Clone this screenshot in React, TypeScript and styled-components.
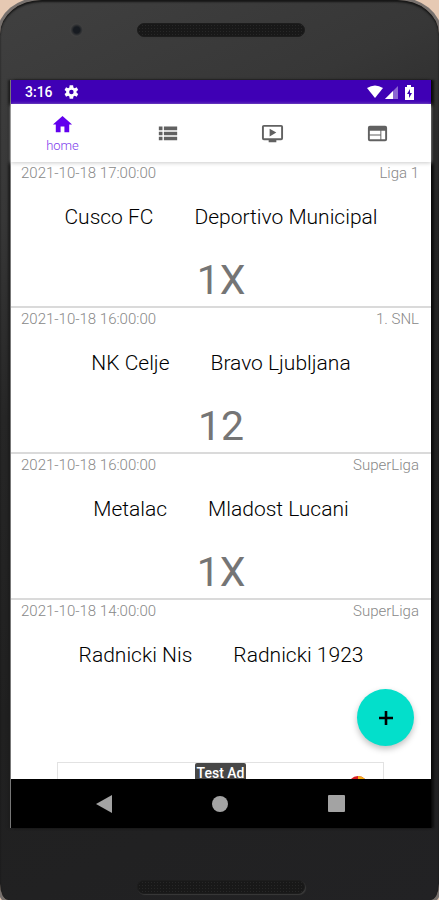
import React from 'react';
import styled, { createGlobalStyle } from 'styled-components';

const GlobalStyle = createGlobalStyle`
  * { box-sizing: border-box; }
  body { margin: 0; background: #e6c9b3; font-family: Roboto, "Liberation Sans", sans-serif; }
  button { border: 0; padding: 0; background: none; font: inherit; cursor: pointer; }
`;

const Phone = styled.div`
  min-height: 100vh;
  display: flex;
  flex-direction: column;
  padding: 0 8px 0 11px;
  background: linear-gradient(155deg, #404040 0%, #373737 20%, #262626 38%, #202020 65%, #222224 100%);
  border-radius: 42px 42px 8px 8px / 34px 34px 16px 16px;
  box-shadow: inset 0 2px 2px #161616, 0 0 0 3px #77716e;
`;

const Bezel = styled.div<{ $height: number; $top: number }>`
  flex: none;
  display: grid;
  grid-template-columns: 1fr 168px 1fr;
  align-items: start;
  height: ${p => p.$height}px;
  padding-top: ${p => p.$top}px;
`;

const Camera = styled.span`
  width: 14px;
  height: 14px;
  margin-left: 58px;
  border-radius: 50%;
  background: radial-gradient(circle at 55% 50%, #171b21 0 30%, #292b2e 42%, #414141 60%, #363636 100%);
`;

const Speaker = styled.span`
  grid-column: 2;
  height: 14px;
  border-radius: 7px;
  background-color: #181818;
  background-image: radial-gradient(#272727 30%, transparent 45%);
  background-size: 3px 3px;
  border: 1px solid #1d1d1d;
  box-shadow: 1px 1px 1px #3a3a3a;
`;

const Screen = styled.div`
  flex: 1;
  min-height: 0;
  display: flex;
  flex-direction: column;
  background: #fff;
  box-shadow: -1px 0 0 #777, 1px 0 0 #090909, 3px 0 2px #101010, -3px 0 2px #1d1d1d;
`;

const StatusBar = styled.div`
  flex: none;
  display: flex;
  align-items: center;
  height: 24px;
  padding: 0 14px;
  background: #3f00b5;
  color: #fff;
  font-size: 14px;
  font-weight: 500;
`;

const StatusIcons = styled.div`
  display: flex;
  align-items: center;
  gap: 2px;
  margin-left: auto;
`;

const Glyph = styled.svg<{ $size: number; $gap?: number }>`
  display: block;
  width: ${p => p.$size}px;
  height: ${p => p.$size}px;
  margin-left: ${p => p.$gap ?? 0}px;
  fill: currentColor;
`;

const Tabs = styled.nav`
  flex: none;
  display: grid;
  grid-template-columns: repeat(4, 1fr);
  height: 58px;
  background: #fff;
  box-shadow: 0 1px 4px #ccc;
  z-index: 1;
`;

const Tab = styled.button<{ $active?: boolean }>`
  display: flex;
  flex-direction: column;
  align-items: center;
  justify-content: center;
  gap: 3px;
  padding-right: 2px;
  color: ${p => (p.$active ? '#6200ee' : '#616161')};
  font-size: 13px;
  line-height: 14px;
`;

const TabLabel = styled.span`
  color: #7c3aec;
  font-weight: 300;
`;

const Content = styled.main`
  flex: 1;
  min-height: 0;
  position: relative;
  display: flex;
  flex-direction: column;
`;

const Matches = styled.ul`
  flex: 1;
  min-height: 0;
  margin: 0;
  padding: 0;
  list-style: none;
  overflow: hidden;
`;

const Match = styled.li`
  display: flex;
  flex-direction: column;
  height: 146px;
  border-bottom: 2px solid #dadada;
  &:last-child { border-bottom: 0; }
`;

const Meta = styled.div`
  display: flex;
  justify-content: space-between;
  padding: 3px 12px 0 10px;
  color: #888;
  font-size: 15px;
  font-weight: 300;
  line-height: 16px;
`;

const Teams = styled.div`
  display: flex;
  justify-content: center;
  gap: 41px;
  padding-top: 24px;
  color: #000;
  font-size: 21px;
  font-weight: 300;
  line-height: 24px;
  white-space: nowrap;
`;

const Tip = styled.div`
  padding-top: 27px;
  color: #757575;
  font-size: 41px;
  font-weight: 400;
  line-height: 48px;
  text-align: center;
`;

const AddButton = styled.button`
  position: absolute;
  right: 17px;
  bottom: 33px;
  display: grid;
  place-items: center;
  width: 57px;
  height: 57px;
  border-radius: 50%;
  background: #03dfcb;
  color: #000;
  box-shadow: 0 3px 6px rgba(0, 0, 0, 0.25);
`;

const Ad = styled.aside`
  flex: none;
  display: grid;
  grid-template-columns: 1fr auto 1fr;
  align-items: start;
  height: 17px;
  margin: 0 47px 0 46px;
  border: 1px solid #e2e2e2;
  border-bottom: 0;
  overflow: hidden;
`;

const AdLabel = styled.span`
  height: 20px;
  padding: 0 2px;
  border-radius: 2px 2px 0 0;
  background: #474747;
  color: #fff;
  font-size: 14px;
  font-weight: 500;
  line-height: 20px;
`;

const AdLogo = styled.svg`
  justify-self: end;
  width: 20px;
  height: 20px;
  margin: 13px 15px 0 0;
`;

const SystemNav = styled.div`
  flex: none;
  display: grid;
  grid-template-columns: repeat(3, 116px);
  justify-content: center;
  align-items: center;
  height: 49px;
  padding-right: 2px;
  background: #000;
  color: #a3a3a3;
`;

const SystemButton = styled.button`
  display: grid;
  place-items: center;
  color: inherit;
`;

const tabs = [
  { name: 'home', label: 'home', d: 'M10 20v-6h4v6h5v-8h3L12 3 2 12h3v8z' },
  { name: 'list', d: 'M2 5h4v4H2zm0 5.500h4v4H2zM2 16h4v4H2zM7.500 5H22v4H7.500zM7.500 10.500H22v4H7.500zM7.500 16H22v4H7.500z' },
  { name: 'videos', d: 'M21 3H3a2 2 0 0 0-2 2v12a2 2 0 0 0 2 2h5v2h8v-2h5a2 2 0 0 0 2-2V5a2 2 0 0 0-2-2zm0 14H3V5h18zM9 7v8l7-4z' },
  { name: 'web', d: 'M20 4H4a2 2 0 0 0-2 2v12a2 2 0 0 0 2 2h16a2 2 0 0 0 2-2V6a2 2 0 0 0-2-2zM15 18H4v-4h11zm0-5H4V9h11zm5 5h-4V9h4z' },
];

const matches = [
  { date: '2021-10-18 17:00:00', league: 'Liga 1', home: 'Cusco FC', away: 'Deportivo Municipal', tip: '1X' },
  { date: '2021-10-18 16:00:00', league: '1. SNL', home: 'NK Celje', away: 'Bravo Ljubljana', tip: '12' },
  { date: '2021-10-18 16:00:00', league: 'SuperLiga', home: 'Metalac', away: 'Mladost Lucani', tip: '1X' },
  { date: '2021-10-18 14:00:00', league: 'SuperLiga', home: 'Radnicki Nis', away: 'Radnicki 1923', tip: '' },
];

export default function App() {
  return (
    <>
      <GlobalStyle />
      <Phone>
        <Bezel $height={80} $top={23}><Camera /><Speaker /></Bezel>
        <Screen>
          <StatusBar>
            <span>3:16</span>
            <Glyph $size={18} $gap={9} viewBox="0 0 24 24">
              <path fillRule="evenodd" d="M19.400 13a7.800 7.800 0 0 0 0-2l2.200-1.700-2-3.500-2.700 1.100-1.700-1L14.800 3h-4.600l-.4 2.900-1.700 1-2.700-1.100-2 3.500L5.600 11a7.800 7.800 0 0 0 0 2l-2.200 1.700 2 3.500 2.700-1.100 1.700 1 .4 2.900h4.600l.4-2.900 1.700-1 2.700 1.100 2-3.500zM12.500 15a3 3 0 1 1 0-6 3 3 0 0 1 0 6z" />
            </Glyph>
            <StatusIcons>
              <Glyph $size={16} viewBox="0 0 16 16"><path d="M0 4Q8-1 16 4L8 14z" /></Glyph>
              <Glyph $size={14} viewBox="0 0 14 14"><path opacity=".4" d="M13 1v13H0z" /><path d="M8 6v8H0z" /></Glyph>
              <Glyph $size={15} $gap={1} viewBox="0 0 15 15">
                <path fillRule="evenodd" d="M5 0h4v2h3v13H3V2h2zM8 4 5 9h2v4l3-5H8z" />
              </Glyph>
            </StatusIcons>
          </StatusBar>
          <Tabs>
            {tabs.map(t => (
              <Tab key={t.name} $active={!!t.label} aria-label={t.name}>
                <Glyph $size={t.name === 'list' ? 22 : 23} viewBox="0 0 24 24"><path d={t.d} /></Glyph>
                {t.label && <TabLabel>{t.label}</TabLabel>}
              </Tab>
            ))}
          </Tabs>
          <Content>
            <Matches>
              {matches.map(m => (
                <Match key={m.home}>
                  <Meta><time>{m.date}</time><span>{m.league}</span></Meta>
                  <Teams><span>{m.home}</span><span>{m.away}</span></Teams>
                  {m.tip && <Tip>{m.tip}</Tip>}
                </Match>
              ))}
            </Matches>
            <Ad>
              <span />
              <AdLabel>Test Ad</AdLabel>
              <AdLogo viewBox="0 0 24 24"><circle cx="12" cy="12" r="12" fill="#d71920" /><path d="M12 0a12 12 0 0 1 12 12H12z" fill="#f5ae18" /></AdLogo>
            </Ad>
            <AddButton aria-label="Add">
              <Glyph $size={14} viewBox="0 0 14 14"><path d="M5.700 0h2.600v5.700H14v2.600H8.300V14H5.700V8.300H0V5.700h5.700z" /></Glyph>
            </AddButton>
          </Content>
          <SystemNav>
            <SystemButton aria-label="Back"><Glyph $size={18} viewBox="0 0 18 18"><path d="M17 0v18L1 9z" /></Glyph></SystemButton>
            <SystemButton aria-label="Home"><Glyph $size={16} viewBox="0 0 16 16"><circle cx="8" cy="8" r="8" /></Glyph></SystemButton>
            <SystemButton aria-label="Recent apps"><Glyph $size={17} viewBox="0 0 17 17"><rect width="17" height="17" rx="1" /></Glyph></SystemButton>
          </SystemNav>
        </Screen>
        <Bezel $height={72} $top={52}><Speaker /></Bezel>
      </Phone>
    </>
  );
}
